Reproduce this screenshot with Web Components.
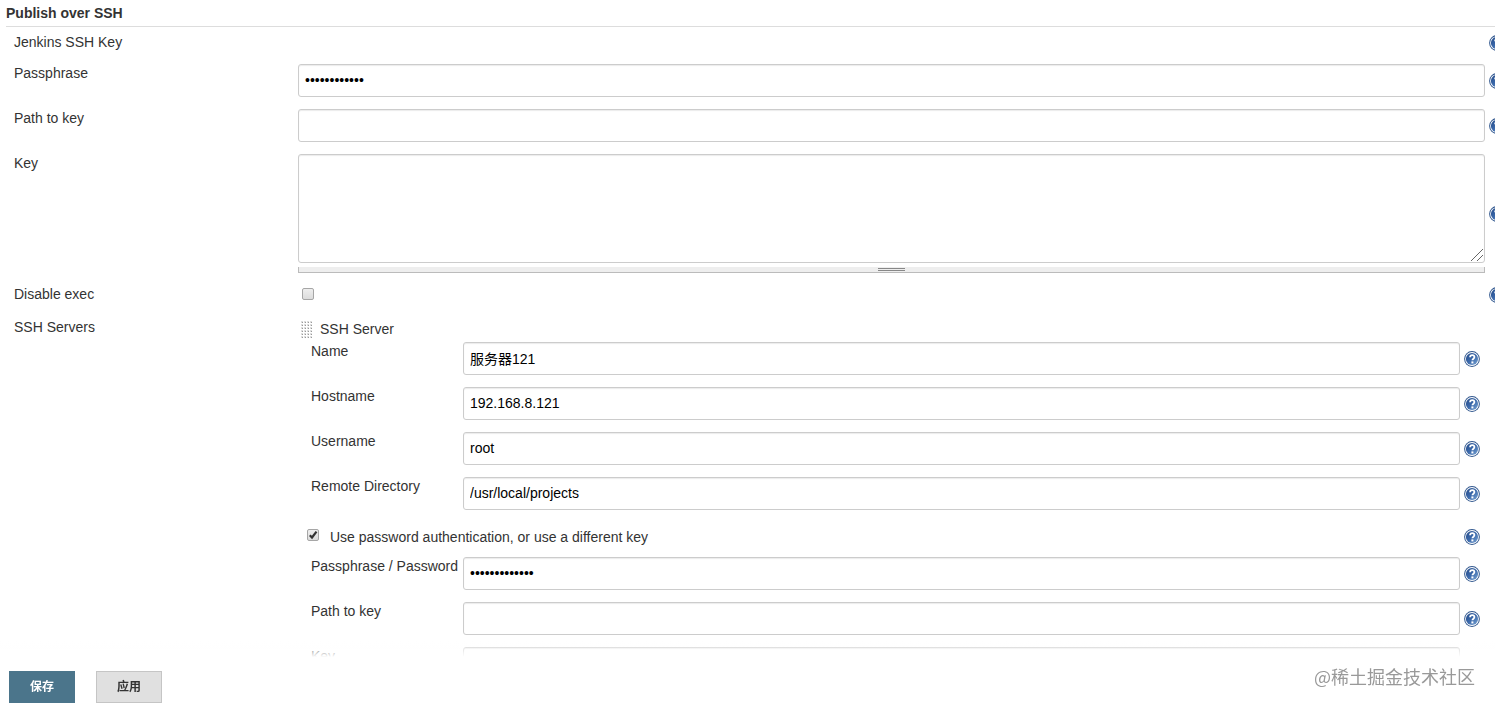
<!DOCTYPE html>
<html lang="zh-CN">
<head>
<meta charset="utf-8">
<title>Publish over SSH</title>
<style>
html, body { height: 100%; }
body {
  margin: 0;
  overflow: hidden;
  background: #fff;
  color: #333;
  font: 14px/18px "Liberation Sans", "Noto Sans CJK SC", sans-serif;
}
</style>
</head>
<body>
<config-page>
  <config-section heading="Publish over SSH">
    <config-entry label="Jenkins SSH Key" type="none"></config-entry>
    <config-entry label="Passphrase" type="password" value="passphrase12"></config-entry>
    <config-entry label="Path to key" type="text"></config-entry>
    <config-entry label="Key" type="textarea"></config-entry>
    <config-entry label="Disable exec" type="checkbox"></config-entry>
    <server-list label="SSH Servers">
      <server-item heading="SSH Server">
        <config-entry nested label="Name" type="text" value="服务器121"></config-entry>
        <config-entry nested label="Hostname" type="text" value="192.168.8.121"></config-entry>
        <config-entry nested label="Username" type="text" value="root"></config-entry>
        <config-entry nested label="Remote Directory" type="text" value="/usr/local/projects"></config-entry>
        <config-option label="Use password authentication, or use a different key" checked></config-option>
        <config-entry nested label="Passphrase / Password" type="password" value="passphrase123"></config-entry>
        <config-entry nested label="Path to key" type="text"></config-entry>
        <config-entry nested label="Key" type="textarea"></config-entry>
      </server-item>
    </server-list>
  </config-section>
  <action-bar slot="actions">
    <action-button primary>保存</action-button>
    <action-button>应用</action-button>
    <span slot="credit">@稀土掘金技术社区</span>
  </action-bar>
</config-page>

<script>
function define(name, html, setup) {
  const template = document.createElement('template');
  template.innerHTML = html;
  customElements.define(name, class extends HTMLElement {
    constructor() {
      super();
      this.attachShadow({ mode: 'open' }).append(template.content.cloneNode(true));
    }
    connectedCallback() {
      if (setup && !this.ready) { this.ready = true; setup(this, this.shadowRoot); }
    }
  });
}

define('config-page', `
<style>
:host { display: block; height: 100%; overflow: hidden; }
</style>
<main><slot></slot></main>
<slot name="actions"></slot>`);

define('config-section', `
<style>
:host { display: block; }
h1 { margin: 0 0 6px 6px; padding: 4px 0; border-bottom: 1px solid #ddd; font: bold 14px/18px "Liberation Sans", sans-serif; }
/* the table runs a little past the right edge of the window */
.body { margin: 0 -10px 0 14px; }
</style>
<h1></h1>
<div class="body"><slot></slot></div>`,
(host, root) => { root.querySelector('h1').textContent = host.getAttribute('heading'); });

define('help-link', `
<style>
:host { display: block; width: 16px; height: 16px; }
a, svg { display: block; }
</style>
<a href="#help" aria-label="Help">
<svg width="16" height="16" viewBox="0 0 16 16">
  <defs><linearGradient id="g" x1="0" y1="0" x2="1" y2="1">
    <stop offset="0" stop-color="#254b88"/><stop offset=".5" stop-color="#3b69ab"/><stop offset="1" stop-color="#7da7d4"/>
  </linearGradient></defs>
  <circle cx="8" cy="8" r="7.9" fill="#32588f"/>
  <circle cx="8" cy="8" r="6.9" fill="#fff"/>
  <circle cx="8" cy="8" r="6.1" fill="url(#g)"/>
  <path d="M6.1 6.2C6.1 4.6 7 4.1 8.2 4.1s2.2.6 2.2 2c0 1.5-2 1.7-2 3.2" fill="none" stroke="#fff" stroke-width="1.8"/>
  <rect x="7.4" y="10.4" width="2" height="2" fill="#fff"/>
</svg></a>`);

define('check-box', `
<style>
:host { display: block; }
label { display: flex; align-items: center; }
.box { display: grid; width: 12px; height: 12px; margin-bottom: 4px; }
input, svg { grid-area: 1 / 1; width: 12px; height: 12px; margin: 0; }
input { appearance: none; box-sizing: border-box; border: 1px solid #a6a6a6; border-radius: 2px; background: linear-gradient(#eee, #dcdcdc); }
svg { display: none; pointer-events: none; z-index: 1; }
input:checked + svg { display: block; }
.text { margin-left: 11px; }
.text:empty { display: none; }
</style>
<label><span class="box"><input type="checkbox"><svg viewBox="0 0 12 12"><path d="M2.8 6.2 5 8.5 9.5 2.7" fill="none" stroke="#333" stroke-width="2.2"/></svg></span><span class="text"></span></label>`,
(host, root) => {
  const input = root.querySelector('input');
  input.checked = host.hasAttribute('checked');
  if (host.hasAttribute('name')) input.setAttribute('aria-label', host.getAttribute('name'));
  root.querySelector('.text').textContent = host.getAttribute('label') || '';
});

define('config-entry', `
<style>
:host { display: grid; grid-template-columns: 284px minmax(0, 1fr) 16px; align-items: start; margin-bottom: 12px; }
:host([nested]) { grid-template-columns: 152px minmax(0, 1fr) 16px; }
:host([type="none"]) { min-height: 19px; }
:host([type="checkbox"]) { height: 21px; }
help-link { align-self: center; }
:host([type="none"]) help-link, :host([type="checkbox"]) help-link { align-self: start; margin-top: 2px; }
label, .label { white-space: nowrap; }
.control { margin-right: 4px; min-width: 0; }
input, textarea {
  display: block; box-sizing: border-box; width: 100%; margin: 0; padding: 6px 6px 7px;
  border: 1px solid #ccc; border-radius: 3px; background: #fff; color: #000;
  box-shadow: inset 0 1px 1px rgba(0, 0, 0, .08);
  font: inherit; outline: 0;
}
input { height: 33px; }
textarea { height: 109px; resize: vertical; }
textarea::-webkit-resizer { background: url("data:image/svg+xml,%3Csvg xmlns='http://www.w3.org/2000/svg' width='15' height='15'%3E%3Cpath d='M2 14 14 2M8 14l6-6' stroke='%23666' fill='none'/%3E%3C/svg%3E") no-repeat right bottom; }
.handle { display: flex; justify-content: center; box-sizing: border-box; height: 6px; margin-top: 4px; border: 1px solid #bbb; border-top: 0; background: #eee; }
.handle i { width: 27px; height: 1px; margin-top: 1px; border: solid #888; border-width: 1px 0; }
check-box { padding: 3px 4px; }
</style>
<label for="field"></label>
<div class="control"></div>
<help-link></help-link>`,
(host, root) => {
  const type = host.getAttribute('type');
  const text = host.getAttribute('label');
  const control = root.querySelector('.control');
  const label = root.querySelector('label');
  label.textContent = text;
  if (type === 'none' || type === 'checkbox') {
    const span = document.createElement('span');
    span.className = 'label';
    span.textContent = text;
    label.replaceWith(span);
    if (type === 'checkbox') {
      const box = document.createElement('check-box');
      box.setAttribute('name', text);
      control.append(box);
    }
    return;
  }
  const field = document.createElement(type === 'textarea' ? 'textarea' : 'input');
  field.id = 'field';
  if (type !== 'textarea') field.type = type;
  field.value = host.getAttribute('value') || '';
  field.spellcheck = false;
  control.append(field);
  if (type === 'textarea') {
    const handle = document.createElement('div');
    handle.className = 'handle';
    handle.append(document.createElement('i'));
    control.append(handle);
  }
});

define('config-option', `
<style>
:host { display: flex; justify-content: space-between; align-items: center; margin: 18px 0 11px -4px; }
</style>
<check-box></check-box><help-link></help-link>`,
(host, root) => {
  const box = root.querySelector('check-box');
  box.shadowRoot.querySelector('.text').textContent = host.getAttribute('label');
  box.shadowRoot.querySelector('input').checked = host.hasAttribute('checked');
});

define('server-list', `
<style>
:host { display: grid; grid-template-columns: 284px minmax(0, 1fr); margin-right: 20px; }
</style>
<span></span><div><slot></slot></div>`,
(host, root) => { root.querySelector('span').textContent = host.getAttribute('label'); });

define('server-item', `
<style>
:host { display: block; padding: 2px 5px 0 3px; }
header { display: flex; align-items: center; gap: 7px; margin-bottom: 4px; }
svg { display: block; }
.body { padding-left: 10px; }
</style>
<header>
<svg width="12" height="18" viewBox="0 0 12 18"><defs><pattern id="dots" y="1" width="3" height="3" patternUnits="userSpaceOnUse"><rect width="2" height="2" fill="#ddd"/><rect x="1" y="1" width="1" height="1" fill="#999"/></pattern></defs><rect y="1" width="12" height="17" fill="url(#dots)"/></svg>
<span></span>
</header>
<div class="body"><slot></slot></div>`,
(host, root) => { root.querySelector('span').textContent = host.getAttribute('heading'); });

define('action-bar', `
<style>
/* stays over the bottom of the scrolled form, which fades out under it */
:host { position: fixed; left: 0; right: 0; bottom: 0; z-index: 2; padding-top: 16px; background: linear-gradient(rgba(255, 255, 255, 0), #fff 16px); }
.bar { display: flex; align-items: flex-end; gap: 21px; padding: 10px 20px 4px 9px; }
.credit { margin: 0 0 18px auto; color: #999; font: 18px/18px "Noto Sans CJK SC", sans-serif; }
</style>
<div class="bar"><slot></slot><div class="credit"><slot name="credit"></slot></div></div>`);

define('action-button', `
<style>
:host { display: block; }
button {
  display: block; box-sizing: border-box; width: 66px; height: 32px; margin: 0; padding: 0;
  border: 1px solid #c5c5c5; border-radius: 0; background: #e0e0e0; color: #333;
  font: bold 12px/18px "Liberation Sans", "Noto Sans CJK SC", sans-serif;
}
:host([primary]) button { border-color: #4b758b; background: #4b758b; color: #fff; }
</style>
<button type="button"><slot></slot></button>`);
</script>
</body>
</html>
